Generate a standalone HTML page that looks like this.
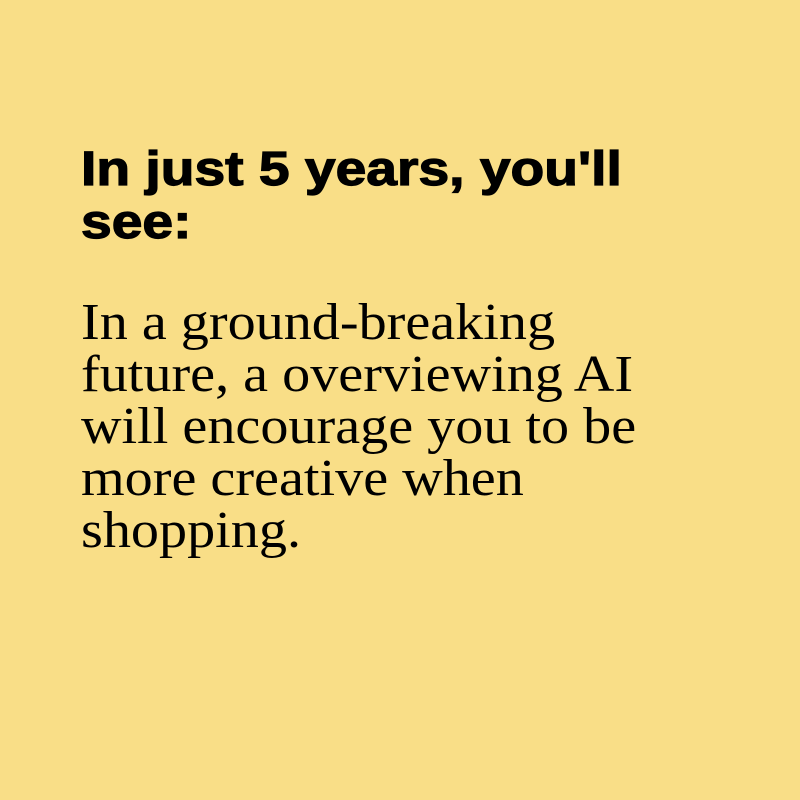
<!DOCTYPE html>
<html><head><style>
html,body{margin:0;padding:0;}
body{width:800px;height:800px;background:#F9DE87;position:relative;overflow:hidden;}
h1{position:absolute;left:81px;top:143px;margin:0;width:620px;font-family:"Liberation Sans",sans-serif;font-weight:bold;font-size:48px;line-height:53px;color:#000;transform:scaleX(1.15);transform-origin:0 0;-webkit-text-stroke:1.2px #000;white-space:nowrap;}
p{position:absolute;left:81px;top:297px;margin:0;width:700px;font-family:"Liberation Serif",serif;font-size:52px;line-height:52px;color:#000;white-space:nowrap;transform:scaleX(1.08);transform-origin:0 0;}
</style></head><body>
<h1>In just 5 years, you'll<br>see:</h1>
<p>In a ground-breaking<br>future, a overviewing AI<br>will encourage you to be<br>more creative when<br>shopping.</p>
</body></html>
